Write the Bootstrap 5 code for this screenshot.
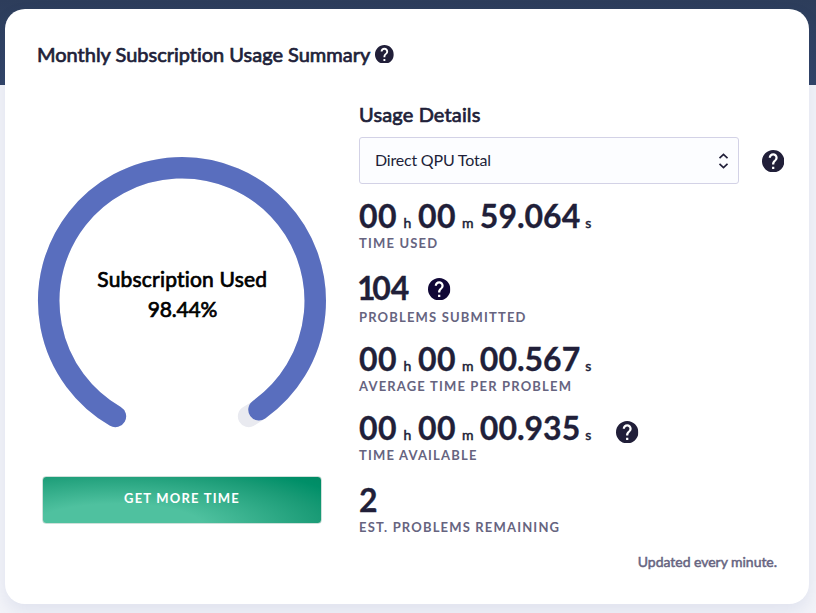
<!DOCTYPE html>
<html lang="en">
<head>
<meta charset="utf-8">
<meta name="viewport" content="width=device-width, initial-scale=1">
<title>Monthly Subscription Usage Summary</title>
<link href="https://cdn.jsdelivr.net/npm/bootstrap@5.3.0/dist/css/bootstrap.min.css" rel="stylesheet">
<style>
html,body{height:613px;overflow:hidden}
body{font-family:Lato,"Liberation Sans",sans-serif;font-variant-ligatures:none;color:#211f39;background:linear-gradient(#2d3d5b,#314467) 0 0/100% 85px no-repeat #f3f4f9;padding:9px 7px 9px 5px}
.usage-card{height:595px;border-radius:20px;box-shadow:0 8px 18px rgba(60,80,150,.1);padding:31px 24px 0 32px}
.ttl{font-size:20px;font-weight:400;line-height:28px;-webkit-text-stroke:.7px}
.ttl-main{letter-spacing:-.01px}
.ttl-sub{letter-spacing:.15px;margin-bottom:9px}
.help{fill:#211f39;width:22.4px;height:22.4px;flex:none}
.help-sm{width:18.8px;height:18.8px;margin-left:5px}
.help-side{margin:1px 0 0 23px}
.help-dark{fill:#100736;margin:3px 0 0 19px}
.help-low{margin:12px 0 0 20px}
.gauge-col{width:290px;padding-top:87px}
.gauge{width:290px;height:290px}
.gauge text{font-size:21px;fill:#000;stroke:#000;stroke-width:.7px;text-anchor:middle}
.detail-col{width:426px;margin-left:32px;padding-top:32px}
.picker{width:380px;height:47px;border:1px solid #d3d2e6;border-radius:3px;background:#fcfdff;padding:0 10px 0 15px;font-size:16px;letter-spacing:-.2px}
.picker span{margin-top:-1px}
.buy{width:280px;height:48px;margin:31px 0 0 5px;border:1px solid #cfe0da;border-radius:4px;color:#fff;font-size:13px;font-weight:700;letter-spacing:1.2px;background:radial-gradient(ellipse 205px 55px at 27% 106%,#4fc19f 0,#4fc19f 42%,#1a9b76 100%,#008f68 122%,#008660 145%) border-box}
.buy:hover{color:#fff}
.buy span{margin-top:-2px}
.metrics{padding-top:13px}
.metric{height:69px}
.metric-1{height:73px}.metric-2{height:70px}.metric-4{height:72px}
.val{font-size:32px;font-weight:700;line-height:38px;height:38px;-webkit-text-stroke:.3px}
.metric-2 .val{height:39px;line-height:36px}
.pair{letter-spacing:.4px}
.val-one{letter-spacing:-3.3px;margin-left:-2px}
.unit{font-size:14px;font-weight:400;-webkit-text-stroke:.5px;text-align:center}
.unit-h{width:21px}.unit-m{width:24px}.unit-s{width:16px}
.cap{font-size:13px;font-weight:700;letter-spacing:1.17px;line-height:16px;color:#66647f}
.note{font-size:14px;-webkit-text-stroke:.5px;color:#66647f;letter-spacing:-.03px;margin:16px 8px 0 0}
</style>
<script src="https://cdn.jsdelivr.net/npm/bootstrap@5.3.0/dist/js/bootstrap.bundle.min.js"></script>
</head>
<body>
<svg width="0" height="0" class="position-absolute"><symbol id="q" viewBox="2 2 20 20"><path d="M12 2C6.48 2 2 6.48 2 12s4.48 10 10 10 10-4.48 10-10S17.52 2 12 2zm1 17h-2v-2h2v2zm2.07-7.75l-.9.92C13.45 12.9 13 13.5 13 15h-2v-.5c0-1.1.45-2.1 1.17-2.83l1.24-1.26c.37-.36.59-.86.59-1.41 0-1.1-.9-2-2-2s-2 .9-2 2H8c0-2.21 1.79-4 4-4s4 1.79 4 4c0 .88-.36 1.68-.93 2.25z"/></symbol></svg>
<main class="usage-card bg-white">
  <div class="d-flex align-items-center"><h1 class="ttl ttl-main mb-0">Monthly Subscription Usage Summary</h1><svg class="help help-sm"><use href="#q"/></svg></div>
  <div class="d-flex">
    <section class="gauge-col">
      <svg class="gauge d-block" viewBox="37 155 290 290" fill="none" stroke-width="21.5" stroke-linecap="round">
        <path stroke="#e9eaf0" d="M115.4 416.4A133.25 133.25 0 1 1 248.6 416.4"/>
        <path stroke="#596ebe" d="M115.4 416.4A133.25 133.25 0 1 1 259 409.700"/>
        <text x="182.300" y="287" letter-spacing=".2">Subscription Used</text>
        <text x="182.500" y="317" letter-spacing="-.2">98.44%</text>
      </svg>
      <button class="btn buy d-flex align-items-center justify-content-center p-0"><span>GET MORE TIME</span></button>
    </section>
    <section class="detail-col">
      <h2 class="ttl ttl-sub">Usage Details</h2>
      <div class="d-flex align-items-center">
        <div class="picker d-flex align-items-center justify-content-between" role="button"><span>Direct QPU Total</span>
          <svg width="10" height="16" viewBox="0 0 10 16" fill="none" stroke="#211f39" stroke-width="1.7"><path d="M1.500 5.200 5.500 1.500 9.500 5.200M1.500 10.800 5.500 14.500 9.500 10.800"/></svg></div>
        <svg class="help help-side"><use href="#q"/></svg>
      </div>
      <div class="metrics">
        <div class="metric-1"><div class="val d-flex align-items-baseline"><span class="pair">00</span><span class="unit unit-h">h</span><span class="pair">00</span><span class="unit unit-m">m</span><span>59.064</span><span class="unit unit-s">s</span></div><div class="cap">TIME USED</div></div>
        <div class="metric-2"><div class="val d-flex align-items-start"><span><span class="val-one">1</span>04</span><svg class="help help-dark mt-2"><use href="#q"/></svg></div><div class="cap">PROBLEMS SUBMITTED</div></div>
        <div class="metric"><div class="val d-flex align-items-baseline"><span class="pair">00</span><span class="unit unit-h">h</span><span class="pair">00</span><span class="unit unit-m">m</span><span>00.567</span><span class="unit unit-s">s</span></div><div class="cap">AVERAGE TIME PER PROBLEM</div></div>
        <div class="metric-4"><div class="val d-flex align-items-baseline"><span class="pair">00</span><span class="unit unit-h">h</span><span class="pair">00</span><span class="unit unit-m">m</span><span>00.935</span><span class="unit unit-s">s</span><svg class="help help-low align-self-start"><use href="#q"/></svg></div><div class="cap">TIME AVAILABLE</div></div>
        <div class="metric-last"><div class="val">2</div><div class="cap">EST. PROBLEMS REMAINING</div></div>
      </div>
      <p class="note text-end">Updated every minute.</p>
    </section>
  </div>
</main>
</body>
</html>
